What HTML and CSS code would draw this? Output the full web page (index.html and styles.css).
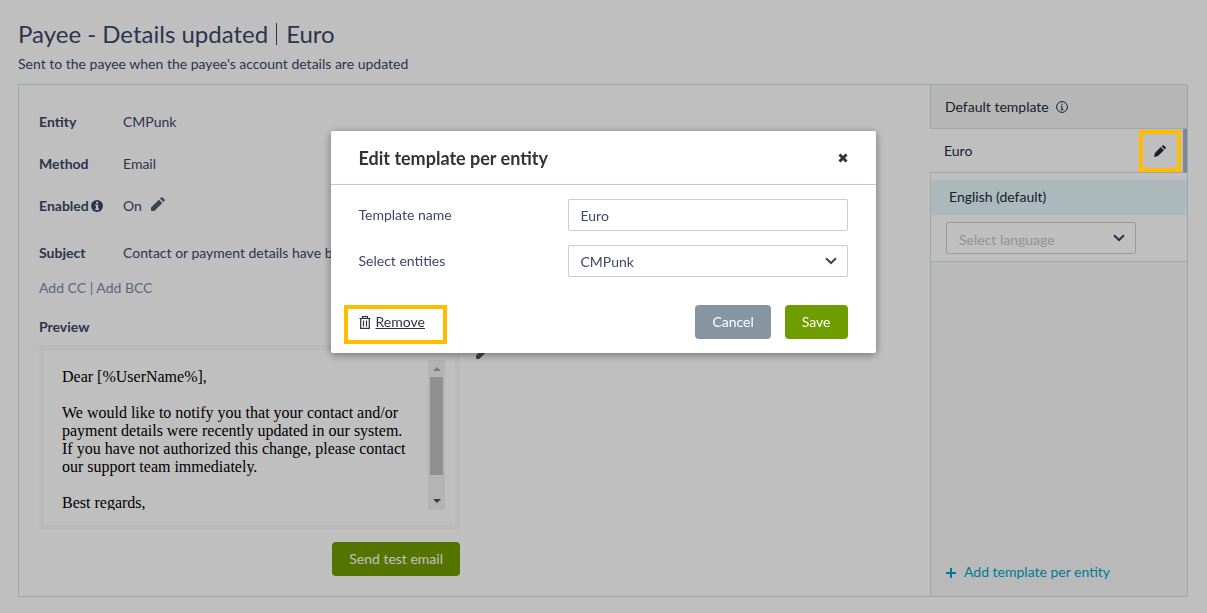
FILE: index.html
```html
<!DOCTYPE html>
<html lang="en">
<head>
<meta charset="UTF-8">
<meta name="viewport" content="width=device-width, initial-scale=1.0">
<title>Payee - Details updated</title>
<link rel="stylesheet" href="styles.css">
</head>
<body>
  <svg class="sprite" aria-hidden="true">
    <symbol id="pencil" viewBox="0 0 14 14">
      <path d="M0 14V10.6L7.9 2.7L11.3 6.1L3.4 14Z"/>
      <path d="M9 1.6L10.2 .4Q10.8-.2 11.4.4L13.6 2.6Q14.2 3.2 13.6 3.8L12.4 5Z"/>
    </symbol>
    <symbol id="chevron" viewBox="0 0 12 8">
      <path d="M1 1.2L6 6L11 1.2" fill="none" stroke="currentColor" stroke-width="2"/>
    </symbol>
  </svg>

  <main class="page">
    <h1>Payee - Details updated<span class="divider"></span>Euro</h1>
    <p class="description">Sent to the payee when the payee's account details are updated</p>

    <div class="panel">
      <section class="details">
        <dl class="fields">
          <div class="field"><dt>Entity</dt><dd>CMPunk</dd></div>
          <div class="field"><dt>Method</dt><dd>Email</dd></div>
          <div class="field">
            <dt>Enabled
              <svg class="info-solid" viewBox="0 0 12 12"><circle cx="6" cy="6" r="6" fill="currentColor"/><path d="M5 1.8h2.1v1.8H5zM4.2 4.6h2.9v3.9h.9V10H4.2V8.500H5V6h-.8z" fill="#fff"/></svg>
            </dt>
            <dd>On <button type="button" class="icon-button" aria-label="Edit enabled"><svg class="pencil"><use href="#pencil"/></svg></button></dd>
          </div>
          <div class="field subject"><dt>Subject</dt><dd>Contact or payment details have been updated</dd></div>
        </dl>
        <p class="copies"><a href="#">Add CC</a> | <a href="#">Add BCC</a></p>

        <h2>Preview</h2>
        <div class="preview-row">
          <div class="preview">
            <div class="email">
              <p>Dear [%UserName%],</p>
              <p>We would like to notify you that your contact and/or payment details were recently updated in our system. If you have not authorized this change, please contact our support team immediately.</p>
              <p>Best regards,</p>
            </div>
            <div class="scrollbar">
              <span class="arrow up"></span>
              <span class="thumb"></span>
              <span class="arrow down"></span>
            </div>
          </div>
          <button type="button" class="icon-button" aria-label="Edit preview"><svg class="pencil"><use href="#pencil"/></svg></button>
        </div>
        <div class="test-row">
          <button type="button" class="btn btn-green">Send test email</button>
        </div>
      </section>

      <aside class="sidebar">
        <div class="default-template">Default template
          <svg class="info" viewBox="0 0 12 12" fill="none" stroke="currentColor"><circle cx="6" cy="6" r="5.400"/><path d="M6 2.700v1.200M4.800 5.200H6v3.500M4.600 8.700h2.800"/></svg>
        </div>
        <div class="entity-template">
          <span>Euro</span>
          <button type="button" class="icon-button edit-template" aria-label="Edit template">
            <svg class="pencil-round" viewBox="0 0 12 12"><path d="M0 12L.9 8L6.800 2.100L9.900 5.200L4 11.100Z"/><path d="M7.600 1.300L8.400.5Q9.200-.2 10 .5L11.500 2Q12.200 2.800 11.500 3.600L10.700 4.400Z"/></svg>
          </button>
        </div>
        <div class="languages">
          <div class="language">English (default)</div>
          <div class="select language-select">
            <select aria-label="Select language"><option>Select language</option></select>
            <svg class="chevron"><use href="#chevron"/></svg>
          </div>
        </div>
        <a href="#" class="add-template">
          <svg class="plus" viewBox="0 0 12 12"><path d="M6 1v10M1 6h10" stroke="currentColor" stroke-width="2"/></svg>Add template per entity</a>
      </aside>
    </div>
  </main>

  <div class="overlay">
    <form class="modal" role="dialog" aria-labelledby="modalTitle">
      <div class="modal-header">
        <h2 id="modalTitle">Edit template per entity</h2>
        <button type="button" class="icon-button" aria-label="Close">
          <svg class="close" viewBox="0 0 10 10"><path d="M1.500 1.500L8.500 8.500M8.500 1.500L1.500 8.500" stroke="currentColor" stroke-width="3"/></svg>
        </button>
      </div>
      <div class="modal-body">
        <div class="form-row">
          <label for="templateName">Template name</label>
          <input type="text" id="templateName" value="Euro">
        </div>
        <div class="form-row">
          <label for="entities">Select entities</label>
          <div class="select">
            <select id="entities"><option>CMPunk</option></select>
            <svg class="chevron"><use href="#chevron"/></svg>
          </div>
        </div>
      </div>
      <div class="modal-footer">
        <a href="#" class="remove">
          <svg class="trash" viewBox="0 0 12 13" fill="none" stroke="currentColor"><path d="M.5 2.500h11M3.500 2.500V.7h5v1.800M1.700 2.500v9.800h8.600V2.500M4.500 4.500v6M7.500 4.500v6" stroke-width="1.200"/></svg>
          <span>Remove</span>
        </a>
        <button type="button" class="btn btn-grey">Cancel</button>
        <button type="submit" class="btn btn-green">Save</button>
      </div>
    </form>
  </div>
</body>
</html>
```
FILE: styles.css
```css
* {
  box-sizing: border-box;
}

body {
  margin: 0;
  font-family: Lato, "Open Sans", sans-serif;
  font-size: 14px;
  line-height: 20px;
  color: #3a476a;
  background-color: #fff;
}

h1, h2, p, dl, dd {
  margin: 0;
}

a {
  color: inherit;
  text-decoration: none;
}

.sprite {
  display: none;
}

.page {
  padding: 20px 19px 16px 18px;
}

h1 {
  display: flex;
  align-items: center;
  font-size: 24px;
  line-height: 28px;
  font-weight: 400;
}

.divider {
  width: 1px;
  height: 22px;
  margin: 0 9px 0 8px;
  background-color: #3a476a;
}

.description {
  margin: 6px 0 10px;
}

.panel {
  display: flex;
  border: 1px solid #d5e0e0;
}

/* left column */
.details {
  flex: 1;
  min-width: 0;
  padding: 16px 20px 20px;
}

.field {
  display: flex;
  align-items: center;
  height: 42px;
}

.field dt {
  width: 84px;
  font-weight: 700;
}

.field.subject {
  margin-top: 5px;
}

.info-solid {
  width: 12px;
  height: 12px;
  margin-left: -1px;
  vertical-align: -1px;
}

.icon-button {
  display: inline-flex;
  padding: 0;
  border: none;
  background: none;
  color: inherit;
  cursor: pointer;
}

.pencil {
  width: 14px;
  height: 14px;
  fill: #4b5f6b;
}

.field .icon-button {
  margin-left: 6px;
}

.copies {
  margin-top: 4px;
  color: #7d8aa8;
}

.details h2 {
  margin: 19px 0 8px;
  font-size: 14px;
  line-height: 20px;
}

.preview-row {
  display: flex;
  align-items: flex-start;
  gap: 16px;
}

.preview {
  display: flex;
  width: 421px;
  padding: 10px 10px 15px 18px;
  border: 5px solid #f8f8f8;
}

.email {
  flex: 1;
  height: 150px;
  padding: 8px 16px 0 0;
  overflow: hidden;
  font-family: "Liberation Serif", serif;
  font-size: 16px;
  line-height: 18px;
  color: #000;
}

.email p {
  margin-bottom: 18px;
}

.scrollbar {
  display: flex;
  flex-direction: column;
  align-items: center;
  width: 17px;
  height: 150px;
  padding: 7px 0;
  background-color: #f1f1f1;
}

.arrow {
  border: 4px solid transparent;
}

.arrow.up {
  border-top: none;
  border-bottom-color: #a3a3a3;
}

.arrow.down {
  margin-top: auto;
  border-bottom: none;
  border-top-color: #505050;
}

.thumb {
  width: 13px;
  height: 98px;
  margin-top: 6px;
  background-color: #c1c1c1;
}

.test-row {
  display: flex;
  justify-content: flex-end;
  width: 421px;
  margin-top: 12px;
}

.btn {
  height: 34px;
  padding: 0 17px 2px;
  border: none;
  border-radius: 4px;
  font-family: inherit;
  font-size: 14px;
  color: #fff;
  cursor: pointer;
}

.btn-green {
  background-color: #6f9d00;
}

.btn-grey {
  background-color: #8795a1;
}

/* right column */
.sidebar {
  display: flex;
  flex-direction: column;
  width: 257px;
  background-color: #f7f7f7;
  color: #232a3b;
}

.default-template {
  display: flex;
  align-items: center;
  gap: 7px;
  height: 44px;
  padding-left: 14px;
  border-left: 1px solid #d5e0e0;
  border-bottom: 1px solid #d5e0e0;
  background-color: #f3f3f3;
}

.info {
  width: 12px;
  height: 12px;
}

.entity-template {
  display: flex;
  align-items: center;
  justify-content: space-between;
  height: 44px;
  padding-left: 14px;
  border-right: 4px solid #a4b4c8;
  border-bottom: 1px solid #d5e0e0;
  background-color: #fff;
}

.edit-template {
  position: relative;
  z-index: 20;
  align-items: center;
  justify-content: center;
  width: 42px;
  height: 42px;
  margin-right: 2px;
  border: 4px solid #ffbc00;
}

.pencil-round {
  width: 12px;
  height: 12px;
  fill: #1a2030;
}

.languages {
  padding: 7px 0;
  border-left: 1px solid #d5e0e0;
  border-bottom: 1px solid #d5e0e0;
  background-color: #fff;
}

.language {
  padding: 7px 18px 8px;
  background-color: #e4f7fc;
}

.select {
  position: relative;
  width: 280px;
}

.language-select {
  width: 190px;
  margin: 7px 0 0 15px;
}

select,
input[type="text"] {
  display: block;
  width: 100%;
  height: 32px;
  padding: 0 12px;
  border: 1px solid #ccc;
  border-radius: 2px;
  background-color: #fff;
  font-family: inherit;
  font-size: 14px;
  color: #3d4b68;
  appearance: none;
}

.language-select select {
  padding-top: 2px;
  color: #c4c4c4;
}

.chevron {
  position: absolute;
  top: 12px;
  right: 11px;
  width: 12px;
  height: 8px;
  color: #3d4458;
  pointer-events: none;
}

.add-template {
  display: flex;
  flex: 1;
  align-items: flex-end;
  gap: 7px;
  padding: 0 14px 14px;
  border-left: 1px solid #d5e0e0;
  color: #00a3c8;
}

.plus {
  width: 12px;
  height: 12px;
  margin-bottom: 3px;
}

/* modal */
.overlay {
  position: fixed;
  inset: 0;
  z-index: 10;
  display: flex;
  justify-content: center;
  align-items: flex-start;
  padding: 131px 1px 0 0;
  background-color: rgba(0, 0, 0, 0.25);
}

.modal {
  width: 545px;
  border-radius: 2px;
  background-color: #fff;
  box-shadow: 0 2px 8px rgba(0, 0, 0, 0.4);
}

.modal-header {
  display: flex;
  align-items: center;
  justify-content: space-between;
  height: 54px;
  padding: 0 28px;
  border-bottom: 1px solid #c5c5d6;
  color: #333;
}

.modal-header h2 {
  font-size: 18px;
  line-height: 24px;
}

.close {
  width: 10px;
  height: 10px;
}

.modal-body {
  display: flex;
  flex-direction: column;
  gap: 14px;
  padding: 14px 28px 28px;
}

.form-row {
  display: flex;
  align-items: center;
  justify-content: space-between;
}

.form-row input[type="text"] {
  width: 280px;
}

.modal-footer {
  display: flex;
  align-items: center;
  gap: 14px;
  padding: 0 28px 14px;
}

.remove {
  position: relative;
  display: flex;
  align-items: center;
  gap: 5px;
  margin-right: auto;
  color: #2b3140;
}

.remove span {
  text-decoration: underline;
}

.remove::after {
  content: "";
  position: absolute;
  inset: -7px -22px -12px -15px;
  border: 4px solid #ffbc00;
}

.trash {
  width: 12px;
  height: 13px;
}
```
